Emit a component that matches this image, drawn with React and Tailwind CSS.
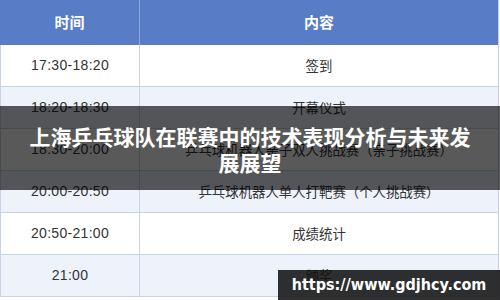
export default function App() {
  const rows = [
    ["17:30-18:20", "签到"],
    ["18:20-18:30", "开幕仪式"],
    ["18:30-20:00", "乒乓球机器人亲子双人挑战赛（亲子挑战赛）"],
    ["20:00-20:50", "乒乓球机器人单人打靶赛（个人挑战赛）"],
    ["20:50-21:00", "成绩统计"],
    ["21:00", "颁奖"],
  ];
  const cjk = { fontFamily: '"Noto Sans CJK SC", "Noto Sans", sans-serif' };
  return (
    <div className="relative w-[500px] h-[300px] overflow-hidden bg-white">
      <div className="w-[499px] flex flex-col border-r border-[#c5d0e6]">
        <div className="flex h-[45px] bg-[#587cc6] text-white font-bold text-[15px]" style={cjk}>
          <div className="w-[140px] flex items-center justify-center border-r border-[#8ea7da]">时间</div>
          <div className="flex-1 flex items-center justify-center">内容</div>
        </div>
        {rows.map(([t, c], i) => (
          <div
            key={i}
            className={
              "flex h-[42px] border-b border-l border-[#c9d3e8] text-[#333] " +
              (i % 2 === 1 ? "bg-[#eef2fb]" : "bg-white")
            }
          >
            <div
              className="w-[139px] flex items-center justify-center border-r border-[#c9d3e8] text-[14px] tracking-[0.3px]"
              style={{ fontFamily: '"Liberation Sans", Arial, sans-serif' }}
            >
              {t}
            </div>
            <div className="flex-1 flex items-center justify-center text-[13.4px]" style={cjk}>
              {c}
            </div>
          </div>
        ))}
      </div>
      <div className="absolute left-0 top-[106px] w-[500px] h-[84px] bg-[rgba(0,0,0,0.65)] flex items-center justify-center px-[28px]">
        <div
          className="text-white font-bold text-[21px] leading-[26px] text-center pt-[2px]"
          style={cjk}
        >
          上海乒乓球队在联赛中的技术表现分析与未来发展展望
        </div>
      </div>
      <div
        className="absolute left-[278px] top-[270px] w-[222px] h-[30px] bg-[rgba(18,18,18,0.88)] flex items-center justify-center text-white font-bold text-[16px]"
        style={{ fontFamily: '"DejaVu Sans Condensed", "DejaVu Sans", sans-serif' }}
      >
        https://www.gdjhcy.com
      </div>
    </div>
  );
}
